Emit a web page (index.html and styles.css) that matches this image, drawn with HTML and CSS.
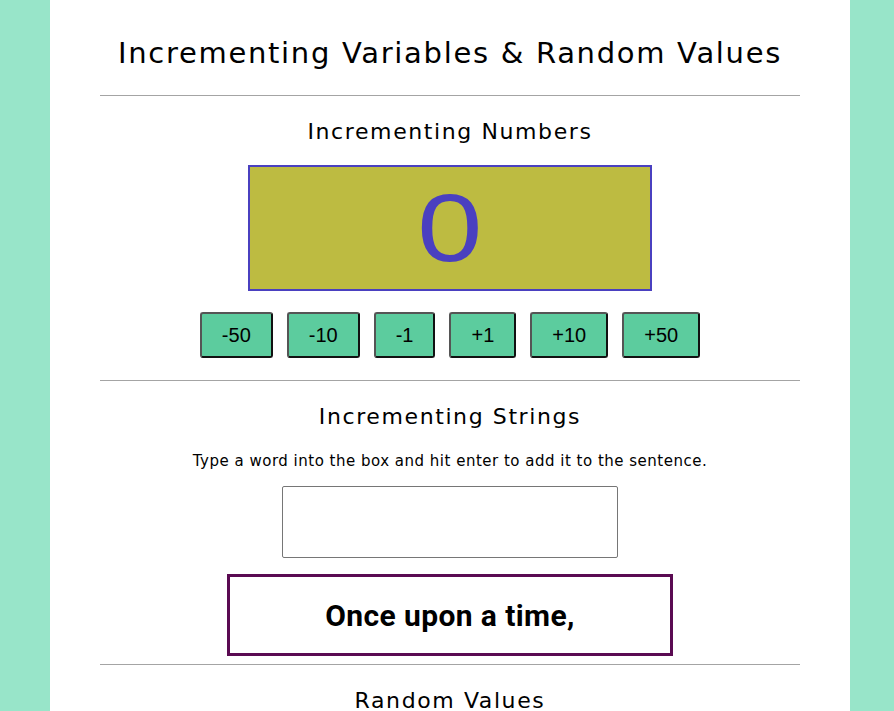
FILE: index.html
```html
<!DOCTYPE html>
<html lang="en">
<head>
<meta charset="utf-8">
<title>Incrementing Variables &amp; Random Values</title>
<link rel="stylesheet" href="styles.css">
</head>
<body>
<main class="page">
  <h1 class="title">Incrementing Variables &amp; Random Values</h1>
  <hr class="rule">
  <section class="section">
    <h2 class="heading">Incrementing Numbers</h2>
    <div class="counter"><span class="counter-value">0</span></div>
    <div class="buttons">
      <button class="btn">-50</button>
      <button class="btn">-10</button>
      <button class="btn">-1</button>
      <button class="btn">+1</button>
      <button class="btn">+10</button>
      <button class="btn">+50</button>
    </div>
  </section>
  <hr class="rule">
  <section class="section">
    <h2 class="heading">Incrementing Strings</h2>
    <p class="hint">Type a word into the box and hit enter to add it to the sentence.</p>
    <input class="word-input" type="text" aria-label="Word">
    <div class="sentence">Once upon a time,</div>
  </section>
  <hr class="rule rule-tight">
  <section class="section">
    <h2 class="heading">Random Values</h2>
  </section>
</main>
</body>
</html>
```

FILE: styles.css
```css
html, body {
  margin: 0;
  padding: 0;
}
body {
  background: #98e5c9;
  font-family: "DejaVu Sans", "Noto Sans", sans-serif;
  color: #000;
}
.page {
  width: 800px;
  margin: 0 0 0 50px;
  background: #fff;
  min-height: 711px;
  padding-top: 31px;
  display: flex;
  flex-direction: column;
  align-items: center;
  box-sizing: border-box;
}
.title {
  margin: 0;
  font-weight: 400;
  font-size: 29px;
  line-height: 44px;
  letter-spacing: 1.7px;
  text-align: center;
}
.rule {
  width: 700px;
  border: 0;
  border-top: 1px solid #a4a4a4;
  margin: 20px 0 0;
  height: 0;
}
.section + .rule {
  margin-top: 22px;
}
.rule-tight,
.section + .rule-tight {
  margin-top: 8px;
}
.section {
  display: flex;
  flex-direction: column;
  align-items: center;
  width: 100%;
}
.heading {
  margin: 21px 0 0;
  font-weight: 400;
  font-size: 22px;
  line-height: 30px;
  letter-spacing: 1.6px;
}
.counter {
  margin-top: 18px;
  width: 400px;
  height: 122px;
  background: #bdbb41;
  border: 2px solid #4a40c0;
  display: flex;
  align-items: center;
  justify-content: center;
}
.counter-value {
  font-family: "Liberation Sans", Arial, sans-serif;
  font-size: 96px;
  line-height: 1;
  color: #4a40c0;
  display: inline-block;
  transform: scaleX(1.22);
}
.buttons {
  margin-top: 21px;
  display: flex;
  gap: 14px;
}
.btn {
  font-family: "Liberation Sans", Arial, sans-serif;
  font-size: 20px;
  height: 46px;
  padding: 0 20px;
  background: #5ccc9e;
  color: #000;
  border: 2px solid;
  border-color: #555 #111 #111 #555;
  border-radius: 3px;
}
.hint {
  margin: 19px 0 0;
  font-size: 15px;
  line-height: 20px;
  letter-spacing: 0.5px;
}
.word-input {
  margin-top: 15px;
  width: 336px;
  height: 72px;
  box-sizing: border-box;
  border: 1px solid #767676;
  border-radius: 2px;
  padding: 0 8px;
}
.sentence {
  margin-top: 16px;
  width: 446px;
  height: 82px;
  box-sizing: border-box;
  border: 3px solid #5a0a52;
  display: flex;
  align-items: center;
  justify-content: center;
  font-family: Roboto, sans-serif;
  font-weight: 700;
  font-size: 30px;
  letter-spacing: 0.4px;
}
```
